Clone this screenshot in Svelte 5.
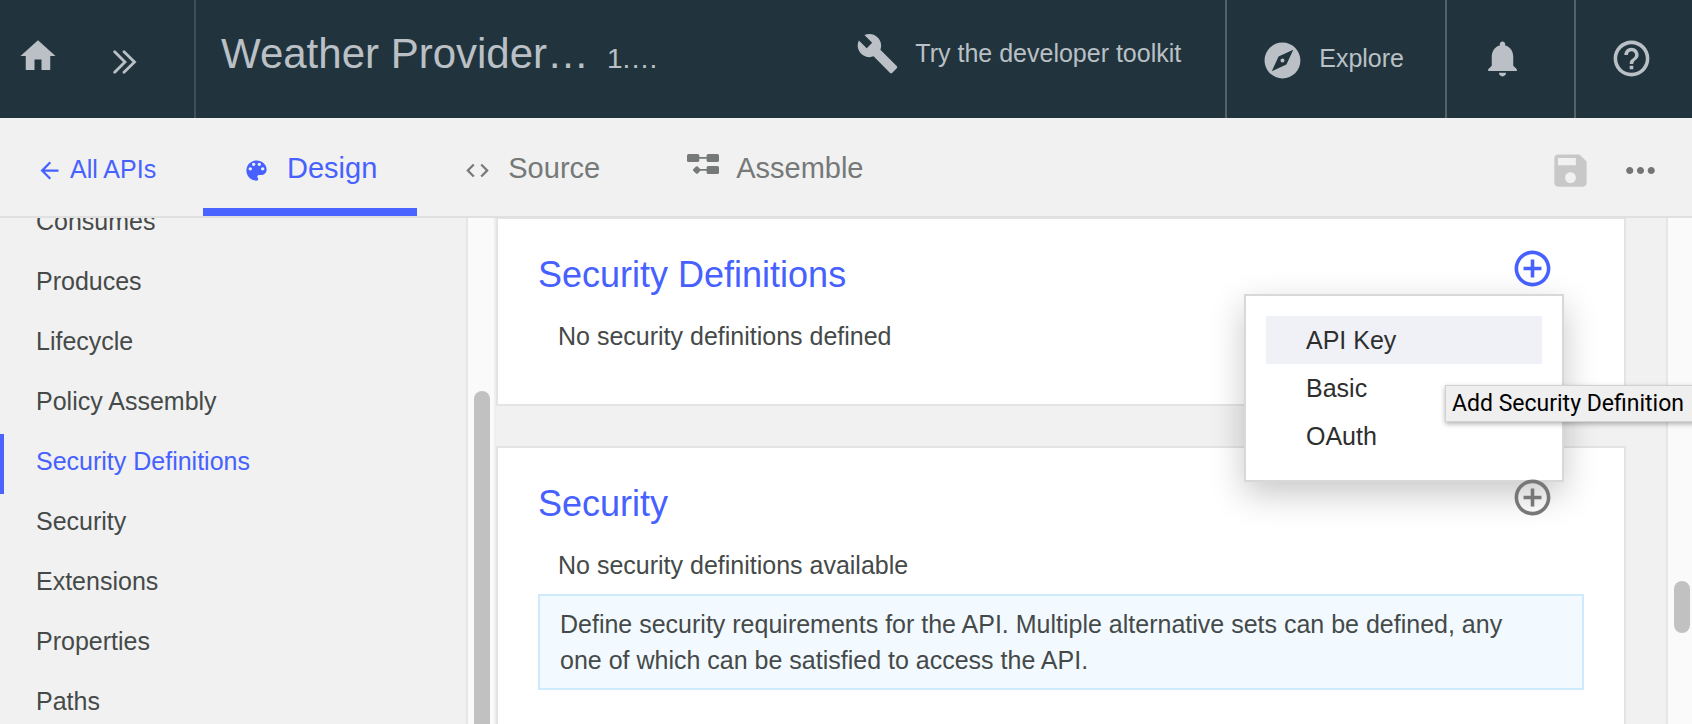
<script>
  const sections = ['Consumes', 'Produces', 'Lifecycle', 'Policy Assembly', 'Security Definitions', 'Security', 'Extensions', 'Properties', 'Paths'];
  const schemes = ['API Key', 'Basic', 'OAuth'];
  let active = $state('Security Definitions');
  let highlighted = $state('API Key');
</script>

{#snippet icon(d, size)}
  <svg width={size} height={size} viewBox="0 0 24 24" fill="currentColor" aria-hidden="true"><path {d} /></svg>
{/snippet}

{#snippet addIcon()}
  {@render icon('M13 7h-2v4H7v2h4v4h2v-4h4v-2h-4V7zm-1-5C6.48 2 2 6.48 2 12s4.48 10 10 10 10-4.48 10-10S17.52 2 12 2zm0 18c-4.41 0-8-3.59-8-8s3.59-8 8-8 8 3.59 8 8-3.59 8-8 8z', 43)}
{/snippet}

<div class="app">
  <header class="topbar">
    <nav class="home">
      <a href="#home" aria-label="Home">{@render icon('M10 20v-6h4v6h5v-8h3L12 3 2 12h3v8z', 42)}</a>
      <button class="expand" aria-label="Expand navigation">
        <svg width="24" height="24" viewBox="0 0 24 24" fill="none" stroke="currentColor" stroke-width="2.8" stroke-linecap="round" aria-hidden="true">
          <path d="M1.7 1.7 12 12 1.7 22.3M11 1.7 21.5 12 11 22.3" />
        </svg>
      </button>
    </nav>
    <h1><span>Weather Provider…</span> <small>1.…</small></h1>
    <a class="toolkit" href="#toolkit">
      {@render icon('M22.7 19l-9.1-9.1c.9-2.3.4-5-1.5-6.9-2-2-5-2.4-7.4-1.3L9 6 6 9 1.6 4.7C.4 7.1.9 10.1 2.9 12.1c1.9 1.9 4.6 2.4 6.9 1.5l9.1 9.1c.4.4 1 .4 1.4 0l2.3-2.3c.5-.4.5-1.1.1-1.4z', 43)}
      <span>Try the developer toolkit</span>
    </a>
    <a class="cell explore" href="#explore">
      {@render icon('M12 10.9c-.61 0-1.1.49-1.1 1.1s.49 1.1 1.1 1.1c.61 0 1.1-.49 1.1-1.1s-.49-1.1-1.1-1.1zM12 2C6.48 2 2 6.48 2 12s4.48 10 10 10 10-4.48 10-10S17.52 2 12 2zm2.19 12.19L6 18l3.81-8.19L18 6l-3.81 8.19z', 43)}
      <span>Explore</span>
    </a>
    <button class="cell bell" aria-label="Notifications">
      {@render icon('M12 22c1.1 0 2-.9 2-2h-4c0 1.1.89 2 2 2zm6-6v-5c0-3.07-1.64-5.64-4.5-6.32V4c0-.83-.67-1.5-1.5-1.5s-1.5.67-1.5 1.5v.68C7.63 5.36 6 7.92 6 11v5l-2 2v1h16v-1l-2-2z', 43)}
    </button>
    <button class="cell help" aria-label="Help">
      {@render icon('M11 18h2v-2h-2v2zm1-16C6.48 2 2 6.48 2 12s4.48 10 10 10 10-4.48 10-10S17.52 2 12 2zm0 18c-4.41 0-8-3.59-8-8s3.59-8 8-8 8 3.59 8 8-3.59 8-8 8zm0-14c-2.21 0-4 1.79-4 4h2c0-1.1.9-2 2-2s2 .9 2 2c0 2-3 1.75-3 5h2c0-2.25 3-2.5 3-5 0-2.21-1.79-4-4-4z', 43)}
    </button>
  </header>

  <div class="toolbar">
    <a class="back" href="#apis">
      {@render icon('M20 11H7.83l5.59-5.59L12 4l-8 8 8 8 1.41-1.41L7.83 13H20v-2z', 27)}
      <span>All APIs</span>
    </a>
    <nav class="tabs">
      <a class="tab current" href="#design">
        {@render icon('M12 3c-4.97 0-9 4.03-9 9s4.03 9 9 9c.83 0 1.5-.67 1.5-1.5 0-.39-.15-.74-.39-1.01-.23-.26-.38-.61-.38-.99 0-.83.67-1.5 1.5-1.5H16c2.76 0 5-2.24 5-5 0-4.42-4.03-8-9-8zm-5.5 9c-.83 0-1.5-.67-1.5-1.5S5.67 9 6.5 9 8 9.67 8 10.5 7.33 12 6.5 12zm3-4C8.67 8 8 7.33 8 6.5S8.67 5 9.5 5s1.5.67 1.5 1.5S10.33 8 9.5 8zm5 0c-.83 0-1.5-.67-1.5-1.5S13.67 5 14.5 5s1.5.67 1.5 1.5S15.33 8 14.5 8zm3 4c-.83 0-1.5-.67-1.5-1.5S16.67 9 17.5 9s1.5.67 1.5 1.5-.67 1.5-1.5 1.5z', 27)}
        <span>Design</span>
      </a>
      <a class="tab" href="#source">
        {@render icon('M9.4 16.6L4.8 12l4.6-4.6L8 6l-6 6 6 6 1.4-1.4zm5.2 0l4.6-4.6-4.6-4.6L16 6l6 6-6 6-1.4-1.4z', 27)}
        <span>Source</span>
      </a>
      <a class="tab" href="#assemble">
        <svg width="32" height="33" viewBox="0 0 32 33" fill="currentColor" aria-hidden="true">
          <rect x="0" y="0" width="12.3" height="8" rx="1.6" />
          <rect x="19.6" y="0" width="12.4" height="8" rx="1.6" />
          <rect x="19.6" y="12" width="12.4" height="8" rx="1.6" />
          <path d="M12 3.1h8v1.7h-8zM10 15.1h10v1.7H10zM6.2 15.2 9 12.6q1-.8 1.8 0l2.8 2.8q.6.6 0 1.2l-2.8 2.8q-.9.8-1.8 0l-2.8-2.7q-.6-.7 0-1.5z" />
        </svg>
        <span>Assemble</span>
      </a>
    </nav>
    <div class="actions">
      <button class="save" aria-label="Save" disabled>
        {@render icon('M17 3H5c-1.11 0-2 .9-2 2v14c0 1.1.89 2 2 2h14c1.1 0 2-.9 2-2V7l-4-4zm-5 16c-1.66 0-3-1.34-3-3s1.34-3 3-3 3 1.34 3 3-1.34 3-3 3zm3-10H5V5h10v4z', 43)}
      </button>
      <button class="more" aria-label="More actions">
        {@render icon('M6 10c-1.1 0-2 .9-2 2s.9 2 2 2 2-.9 2-2-.9-2-2-2zm12 0c-1.1 0-2 .9-2 2s.9 2 2 2 2-.9 2-2-.9-2-2-2zm-6 0c-1.1 0-2 .9-2 2s.9 2 2 2 2-.9 2-2-.9-2-2-2z', 43)}
      </button>
    </div>
  </div>

  <div class="workspace">
    <nav class="sidebar">
      <ul>
        {#each sections as name}
          <li><a href="#section" class:active={name === active} onclick={() => (active = name)}>{name}</a></li>
        {/each}
      </ul>
    </nav>
    <div class="track side"><div class="thumb"></div></div>

    <main>
      <section class="card">
        <div class="card-head">
          <h2>Security Definitions</h2>
          <div class="anchor">
            <button class="add open" aria-label="Add a definition">{@render addIcon()}</button>
            <ul class="menu">
              {#each schemes as scheme}
                <li>
                  <button class:highlight={scheme === highlighted} onmouseenter={() => (highlighted = scheme)}>{scheme}</button>
                </li>
              {/each}
            </ul>
            <div class="tooltip" role="tooltip">Add Security Definition</div>
          </div>
        </div>
        <p class="empty">No security definitions defined</p>
      </section>

      <section class="card">
        <div class="card-head">
          <h2>Security</h2>
          <div class="anchor">
            <button class="add" aria-label="Add a requirement">{@render addIcon()}</button>
          </div>
        </div>
        <p class="empty">No security definitions available</p>
        <p class="note">Define security requirements for the API. Multiple alternative sets can be defined, any one of which can be satisfied to access the API.</p>
      </section>
    </main>
    <div class="track page"><div class="thumb"></div></div>
  </div>
</div>

<style>
  :global(body) {
    margin: 0;
    overflow: hidden;
  }
  .app {
    display: flex;
    flex-direction: column;
    height: 100vh;
    font-family: "Liberation Sans", Arial, sans-serif;
    font-size: 25px;
    color: #454a49;
    background: #f1f1f1;
  }
  .app * {
    box-sizing: border-box;
  }
  a {
    color: inherit;
    text-decoration: none;
  }
  button {
    display: flex;
    padding: 0;
    border: 0;
    background: none;
    color: inherit;
    font: inherit;
    cursor: pointer;
  }
  svg {
    display: block;
    flex: none;
  }
  ul {
    margin: 0;
    padding: 0;
    list-style: none;
  }

  .topbar {
    display: flex;
    flex: none;
    height: 118px;
    background: #21343d;
    color: #bac0c5;
    white-space: nowrap;
  }
  .home {
    display: flex;
    align-items: flex-start;
    gap: 54px;
    padding: 35px 57px 0 17px;
    border-right: 2px solid #404e58;
  }
  .expand {
    padding-top: 15px;
  }
  h1 {
    display: flex;
    align-items: baseline;
    gap: 18px;
    margin: 0;
    padding-left: 25px;
    font-size: 42px;
    font-weight: 400;
    line-height: 108px;
  }
  small {
    font-size: 28px;
  }
  .toolkit {
    display: flex;
    align-items: center;
    gap: 16px;
    margin-left: auto;
    padding: 0 44px 12px 0;
  }
  .cell {
    display: flex;
    align-items: flex-start;
    border-left: 2px solid #536269;
    padding: 37px 39px 0 34px;
  }
  .explore {
    gap: 15px;
    padding: 39px 41px 0 34px;
    line-height: 38px;
  }
  .bell {
    padding-right: 50px;
  }

  .toolbar {
    display: flex;
    flex: none;
    height: 100px;
    border-bottom: 2px solid #e0e0e0;
    color: #757978;
  }
  .back {
    display: flex;
    align-items: center;
    gap: 7px;
    padding: 7px 0 0 36px;
    color: #4661ff;
  }
  .back span {
    width: 133px;
    padding-bottom: 2px;
  }
  .tabs {
    display: flex;
    gap: 7px;
    font-size: 29px;
  }
  .tab {
    display: flex;
    align-items: center;
    gap: 17px;
    padding: 8px 40px 0;
    border-bottom: 8px solid transparent;
    line-height: 38px;
  }
  .tab span {
    padding-top: 2px;
  }
  .tab svg {
    margin-top: 6px;
  }
  .tab.current {
    color: #4661ff;
    border-color: #4a64ff;
  }
  .actions {
    display: flex;
    align-items: center;
    gap: 27px;
    margin-left: auto;
    padding: 7px 30px 0 0;
  }
  .save {
    color: #c8c8c8;
  }
  .more {
    color: #757575;
  }

  .workspace {
    display: flex;
    flex: 1;
    min-height: 0;
    overflow: hidden;
  }
  .sidebar {
    flex: none;
    width: 466px;
  }
  .sidebar ul {
    margin-top: -24px;
  }
  .sidebar a {
    display: block;
    height: 60px;
    padding-left: 32px;
    border-left: 4px solid transparent;
    line-height: 54px;
  }
  .sidebar a.active {
    color: #4661ff;
    border-color: #4a64ff;
  }
  .track {
    flex: none;
    border-left: 2px solid #e6e6e6;
    background: #fafafa;
  }
  .side {
    width: 30px;
    padding: 173px 4px 0 6px;
    border-right: 2px solid #eeeeee;
  }
  .page {
    width: 26px;
    padding: 363px 2px 0 6px;
  }
  .thumb {
    width: 16px;
    height: 52px;
    border-radius: 8px;
    background: #c1c1c1;
  }
  .side .thumb {
    height: 100%;
    border-radius: 8px 8px 0 0;
  }

  main {
    display: flex;
    flex: 1;
    flex-direction: column;
    gap: 40px;
    min-width: 0;
    margin-top: -1px;
    padding-right: 40px;
  }
  .card {
    flex: none;
    padding: 28px 40px 50px;
    border: 2px solid #e4e4e4;
    background: #fff;
  }
  .card-head {
    display: flex;
    justify-content: space-between;
    align-items: flex-start;
    padding-right: 30px;
  }
  h2 {
    margin: 0;
    font-size: 36px;
    font-weight: 400;
    line-height: 56px;
    color: #4661ff;
  }
  .anchor {
    position: relative;
  }
  .add {
    color: #777777;
  }
  .add.open {
    color: #4661ff;
  }
  .empty {
    margin: 15px 0 0;
    padding-left: 20px;
    line-height: 36px;
  }
  .note {
    margin: 11px 0 0;
    padding: 10px 40px 10px 20px;
    border: 2px solid #cfe9fd;
    background: #f2f9ff;
    line-height: 36px;
  }
  .menu {
    position: absolute;
    top: 47px;
    right: -10px;
    width: 320px;
    padding: 20px;
    border: 2px solid #d8d8d8;
    background: #fff;
    box-shadow: 0 12px 32px rgba(0, 0, 0, 0.22);
    color: #2d2f2f;
  }
  .menu button {
    width: 100%;
    padding-left: 40px;
    line-height: 48px;
  }
  .menu .highlight {
    background: #f0f1f7;
  }
  .tooltip {
    position: absolute;
    top: 138px;
    left: -66px;
    padding: 0 12px 0 6px;
    border: 1px solid #d2d2d2;
    background: #efefef;
    box-shadow: 0 2px 5px rgba(0, 0, 0, 0.3);
    color: #000;
    font: 23px/35px Roboto, sans-serif;
    white-space: nowrap;
  }
</style>
